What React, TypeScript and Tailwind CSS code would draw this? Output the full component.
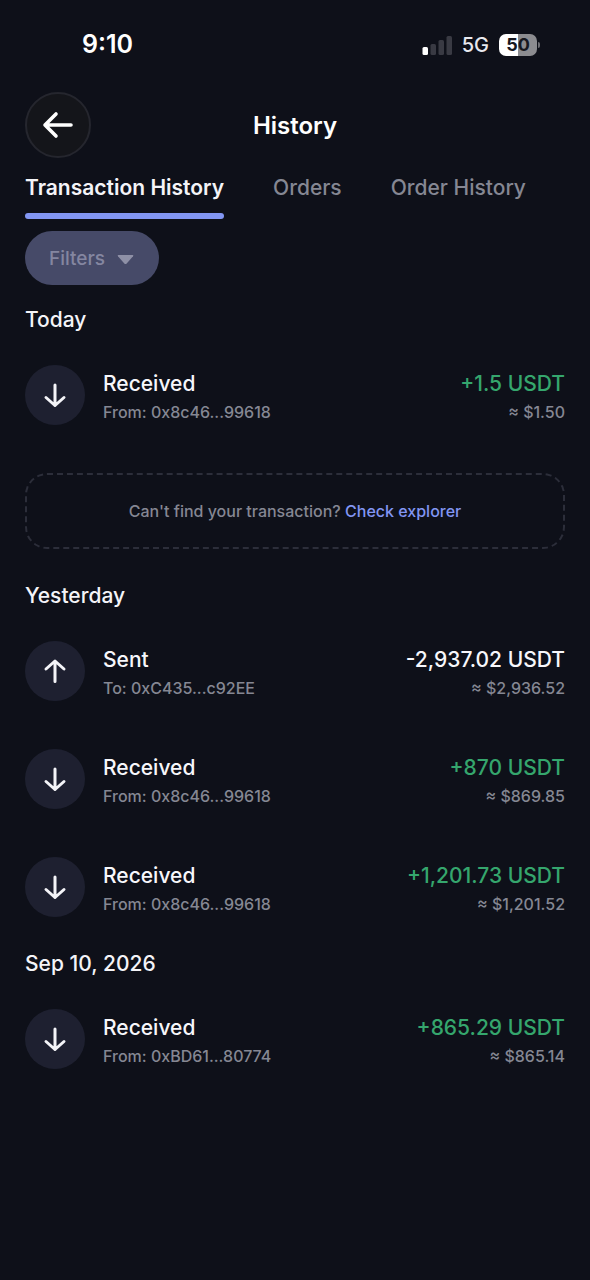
import React from "react";

type Entry = {
  kind: "Received" | "Sent";
  party: string;
  amount: string;
  value: string;
};

const today: Entry[] = [
  { kind: "Received", party: "From: 0x8c46...99618", amount: "+1.5 USDT", value: "≈ $1.50" },
];

const yesterday: Entry[] = [
  { kind: "Sent", party: "To: 0xC435...c92EE", amount: "-2,937.02 USDT", value: "≈ $2,936.52" },
  { kind: "Received", party: "From: 0x8c46...99618", amount: "+870 USDT", value: "≈ $869.85" },
  { kind: "Received", party: "From: 0x8c46...99618", amount: "+1,201.73 USDT", value: "≈ $1,201.52" },
];

const earlier: Entry[] = [
  { kind: "Received", party: "From: 0xBD61...80774", amount: "+865.29 USDT", value: "≈ $865.14" },
];

function StatusBar() {
  return (
    <div className="flex h-[88px] items-center justify-between pt-px pr-[50px] pl-[82px]">
      <span className="text-[25px] font-semibold">9:10</span>
      <div className="flex items-center gap-2.5">
        <svg width="30" height="20" viewBox="0 0 30 20" aria-hidden="true">
          <rect x="0.500" y="12" width="5.500" height="8" rx="1.500" fill="#fff" />
          <rect x="8.500" y="9" width="5.500" height="11" rx="1.500" fill="#393a43" />
          <rect x="16.500" y="5" width="5.500" height="15" rx="1.500" fill="#393a43" />
          <rect x="24.500" y="1" width="5.500" height="19" rx="1.500" fill="#393a43" />
        </svg>
        <span className="text-xl font-medium text-[#e8e8ee]">5G</span>
        <div className="flex items-center gap-px">
          <div className="flex h-[22px] w-[38px] items-center justify-center rounded-[7px] bg-linear-to-r from-white from-50% to-[#8c8c90] to-50% text-lg font-bold text-[#17181f]">
            50
          </div>
          <div className="h-1.5 w-0.5 rounded-r-full bg-[#6c6c72]" />
        </div>
      </div>
    </div>
  );
}

function Row({ entry }: { entry: Entry }) {
  const received = entry.kind === "Received";
  return (
    <li className="flex h-[108px] items-center">
      <div className="flex size-[60px] shrink-0 items-center justify-center rounded-full bg-[#1e2030]">
        <svg
          width="24"
          height="28"
          viewBox="0 0 24 28"
          fill="none"
          stroke="#f4f4f8"
          strokeWidth="3"
          strokeLinecap="round"
          strokeLinejoin="round"
          aria-hidden="true"
        >
          {received ? <path d="M12 4v20.500M3 16.500l9 8 9-8" /> : <path d="M12 24.500V4M3 12l9-8 9 8" />}
        </svg>
      </div>
      <div className="ml-[18px] flex-1 pt-1.5">
        <p className="text-[21px] leading-7 font-medium text-[#f7f7fb]">{entry.kind}</p>
        <p className="text-base leading-7 font-medium text-[#858793]">{entry.party}</p>
      </div>
      <div className="pt-1.5 text-right">
        <p className={received ? "text-[21px] leading-7 font-medium text-[#35a66d]" : "text-[21px] leading-7 font-medium text-[#f7f7fb]"}>
          {entry.amount}
        </p>
        <p className="text-base leading-7 font-medium text-[#858793]">{entry.value}</p>
      </div>
    </li>
  );
}

function Group({ title, entries }: { title: string; entries: Entry[] }) {
  return (
    <section>
      <h2 className="pt-0.5 text-[21px] leading-[42px] font-medium text-[#f4f4f8]">{title}</h2>
      <ul>
        {entries.map((entry) => (
          <Row key={entry.amount} entry={entry} />
        ))}
      </ul>
    </section>
  );
}

export default function App() {
  return (
    <div className="min-h-screen bg-[#0e1019] font-['Inter',sans-serif] text-white">
      <StatusBar />
      <main className="px-[25px] pb-8">
        <header className="grid grid-cols-[66px_1fr_66px] items-center pt-1">
          <button
            type="button"
            aria-label="Back"
            className="flex size-[66px] items-center justify-center rounded-full border-2 border-[#25262e] bg-[#14151a]"
          >
            <svg
              width="32"
              height="28"
              viewBox="0 0 32 28"
              fill="none"
              stroke="#fff"
              strokeWidth="3.600"
              strokeLinecap="round"
              strokeLinejoin="round"
              aria-hidden="true"
            >
              <path d="M29 14H3M14 3L3 14l11 11" />
            </svg>
          </button>
          <h1 className="pt-0.5 text-center text-2xl font-semibold">History</h1>
        </header>
        <nav className="flex gap-[49px] pt-3 text-[21px] font-medium text-[#858793]">
          <button type="button" className="font-semibold text-[#f4f4f8]">
            <span className="block h-[43px] leading-9">Transaction History</span>
            <span className="block h-1.5 rounded-full bg-[#8296f3]" />
          </button>
          <button type="button" className="self-start leading-9">Orders</button>
          <button type="button" className="self-start leading-9">Order History</button>
        </nav>
        <button
          type="button"
          className="mt-3 flex h-[54px] items-center gap-3 rounded-full bg-[#464a68] px-6 pt-0.5 text-[19px] font-medium text-[#8486a0]"
        >
          Filters
          <svg width="18" height="11" viewBox="0 0 18 11" fill="#8e90a6" aria-hidden="true">
            <path d="M1.500 1h14q1.500 0 .5 1.300l-6.300 7.200q-1.200 1.200-2.400 0L1 2.300Q0 1 1.500 1z" />
          </svg>
        </button>
        <div className="pt-3">
          <Group title="Today" entries={today} />
          <div className="my-6 flex h-[76px] items-center justify-center rounded-[22px] border-2 border-dashed border-[#2c2e3a] text-base font-medium text-[#858793]">
            <p>
              Can't find your transaction?{" "}
              <a href="#explorer" className="text-[#8296f3]">
                Check explorer
              </a>
            </p>
          </div>
          <Group title="Yesterday" entries={yesterday} />
          <Group title="Sep 10, 2026" entries={earlier} />
        </div>
      </main>
    </div>
  );
}
